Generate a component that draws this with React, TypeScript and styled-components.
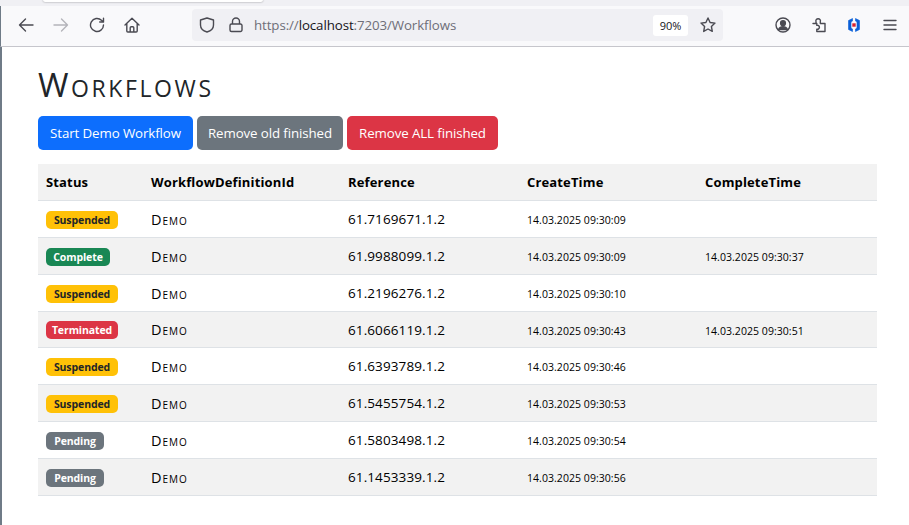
import React from "react";
import styled, { createGlobalStyle } from "styled-components";

const Global = createGlobalStyle`
  html, body { margin: 0; padding: 0; background: #fff; }
  body { width: 909px; height: 525px; overflow: hidden; font-family: "Open Sans", "Noto Sans", sans-serif; }
`;
const Page = styled.div`display: flex; flex-direction: column; width: 909px; height: 525px; overflow: hidden;`;
const TabStrip = styled.div`height: 6px; background: #f0f0f4; padding-left: 43px; flex: none;`;
const ActiveTab = styled.div`width: 220px; height: 2px; background: #fff; border-radius: 0 0 4px 4px; box-shadow: 0 0 2px rgba(0,0,0,.45);`;
const Toolbar = styled.div`height: 41px; flex: none; box-sizing: border-box; background: #f9f9fb; border-bottom: 1px solid #c6c6cc; border-left: 1px solid #6f7b87; display: flex; align-items: center; padding: 0 0 2px 17px;`;
const NavIcon = styled.svg<{ $gap: number; $faded?: boolean }>`width: 16px; height: 16px; flex: none; margin-right: ${p => p.$gap}px; fill: none; stroke: ${p => (p.$faded ? "#b4b4ba" : "#4a4a52")}; stroke-width: 1.4; stroke-linecap: round; stroke-linejoin: round;`;
const LogoIcon = styled.svg`width: 16px; height: 16px; flex: none; margin-right: 20px;`;
const UrlBar = styled.div`width: 531px; height: 32px; margin: 0 52px; background: #f0f0f4; border-radius: 4px; display: flex; align-items: center; padding: 0 7px; box-sizing: border-box; flex: none;`;
const UrlText = styled.div`margin-left: 10px; font: 400 13.3px "Open Sans", sans-serif; color: #6e6e78; flex: 1; white-space: nowrap; letter-spacing: -0.09px;`;
const UrlHost = styled.span`color: #15141a;`;
const Zoom = styled.div`width: 35px; height: 21px; background: #fff; border-radius: 3px; font: 400 11px/21px "Open Sans", sans-serif; color: #15141a; text-align: center; margin-right: 12px;`;
const Main = styled.main`flex: 1; border-left: 2px solid #6f7b87; padding: 16px 32px 0 36px; min-height: 0;`;
const Title = styled.h1`margin: 0 0 11px; font: 400 33px/44px "Open Sans", sans-serif; font-variant: small-caps; color: #212529; letter-spacing: 2.6px; height: 42px;`;
const Buttons = styled.div`display: flex; gap: 4px; margin-bottom: 14px;`;
const Button = styled.button<{ $bg: string; $w: number }>`width: ${p => p.$w}px; height: 34px; border: 0; border-radius: 5px; padding: 0; background: ${p => p.$bg}; color: #fff; font: 400 13.3px "Open Sans", sans-serif; letter-spacing: -0.1px;`;
const Table = styled.table`width: 839px; border-collapse: separate; border-spacing: 0; table-layout: fixed; color: #000;`;
const Head = styled.th<{ $w: number }>`width: ${p => p.$w}px; height: 37px; box-sizing: border-box; background: #f2f2f2; border-bottom: 1px solid #dee2e6; padding: 0 0 0 8px; text-align: left; font: 700 13px "Open Sans", sans-serif; letter-spacing: 0.15px;`;
const Row = styled.tr<{ $alt: boolean }>`background: ${p => (p.$alt ? "#f2f2f2" : "#fff")};`;
const Cell = styled.td<{ $h: number }>`height: ${p => p.$h}px; box-sizing: border-box; border-bottom: 1px solid #dee2e6; padding: 0 0 0 8px; font: 400 13.5px "Open Sans", sans-serif; letter-spacing: 0.1px; white-space: nowrap;`;
const DefCell = styled(Cell)`font-size: 14.5px; font-variant: small-caps; letter-spacing: 1px;`;
const TimeCell = styled(Cell)`padding-top: 2px; font-size: 10.5px; letter-spacing: 0.05px;`;
const Badge = styled.span<{ $bg: string; $fg: string; $w: number }>`display: inline-block; width: ${p => p.$w}px; height: 18px; border-radius: 5px; background: ${p => p.$bg}; color: ${p => p.$fg}; font: 700 10.5px/18px "Open Sans", sans-serif; text-align: center; letter-spacing: -0.1px; vertical-align: middle;`;

const variants: Record<string, { bg: string; fg: string; w: number }> = {
  Suspended: { bg: "#ffc107", fg: "#212529", w: 72 },
  Complete: { bg: "#198754", fg: "#fff", w: 64 },
  Terminated: { bg: "#dc3545", fg: "#fff", w: 72 },
  Pending: { bg: "#6c757d", fg: "#fff", w: 58 },
};

const rows = [
  ["Suspended", "61.7169671.1.2", "14.03.2025 09:30:09", "", 37],
  ["Complete", "61.9988099.1.2", "14.03.2025 09:30:09", "14.03.2025 09:30:37", 37],
  ["Suspended", "61.2196276.1.2", "14.03.2025 09:30:10", "", 37],
  ["Terminated", "61.6066119.1.2", "14.03.2025 09:30:43", "14.03.2025 09:30:51", 36],
  ["Suspended", "61.6393789.1.2", "14.03.2025 09:30:46", "", 37],
  ["Suspended", "61.5455754.1.2", "14.03.2025 09:30:53", "", 37],
  ["Pending", "61.5803498.1.2", "14.03.2025 09:30:54", "", 37],
  ["Pending", "61.1453339.1.2", "14.03.2025 09:30:56", "", 37],
] as const;

export default function App() {
  return (
    <Page>
      <Global />
      <TabStrip><ActiveTab /></TabStrip>
      <Toolbar>
        <NavIcon $gap={19} viewBox="0 0 16 16"><path d="M15 8H1.5M7.5 2 1.5 8l6 6" /></NavIcon>
        <NavIcon $gap={20} $faded viewBox="0 0 16 16"><path d="M1 8h13.5M8.5 2l6 6-6 6" /></NavIcon>
        <NavIcon $gap={19} viewBox="0 0 16 16"><path d="M14.5 8a6.5 6.5 0 1 1-2-4.7L14.5 5M14.5 1.2V5h-3.8" /></NavIcon>
        <NavIcon $gap={0} viewBox="0 0 16 16"><path d="M1 8 8 1.3 15 8M2.8 6.5V14a1 1 0 0 0 1 1h8.4a1 1 0 0 0 1-1V6.5M6.2 15v-4.3a1 1 0 0 1 1-1h1.6a1 1 0 0 1 1 1V15" /></NavIcon>
        <UrlBar>
          <NavIcon $gap={13} viewBox="0 0 16 16"><path d="M8 1 1.5 3v5c0 3.6 3 6 6.5 7 3.5-1 6.5-3.4 6.5-7V3L8 1Z" /></NavIcon>
          <NavIcon $gap={0} viewBox="0 0 16 16"><path d="M4.5 7V4.5a3.5 3.5 0 0 1 7 0V7M3.5 7h9A1.5 1.5 0 0 1 14 8.5V13a1.5 1.5 0 0 1-1.5 1.5h-9A1.5 1.5 0 0 1 2 13V8.5A1.5 1.5 0 0 1 3.5 7Z" /></NavIcon>
          <UrlText>https://<UrlHost>localhost</UrlHost>:7203/Workflows</UrlText>
          <Zoom>90%</Zoom>
          <NavIcon $gap={0} viewBox="0 0 16 16"><path d="M8 1l2.1 4.5 4.9.6-3.6 3.4.9 4.9L8 12l-4.3 2.4.9-4.900L1 6.100l4.900-.6L8 1Z" /></NavIcon>
        </UrlBar>
        <NavIcon $gap={20} viewBox="0 0 16 16"><circle cx="8" cy="8" r="7" /><circle cx="8" cy="6.2" r="2.4" fill="#4a4a52" /><path d="M3.5 12.500c1-2 2.500-2.700 4.500-2.700s3.500.7 4.500 2.700Z" fill="#4a4a52" /></NavIcon>
        <NavIcon $gap={19} viewBox="0 0 16 16"><path d="M2 6.500h3V4.800a2.300 2.300 0 1 1 4.300 0V6.500H14v8H5.800v-2.300a2 2 0 1 0 0-3.800V6.500" /></NavIcon>
        <LogoIcon viewBox="0 0 16 16">
          <path d="M6.500 1.500 2.500 3.500v9l4 2V12L5 11V5l1.500-1ZM9.500 1.500l4 2v9l-4 2V12l1.500-1V5L9.500 4Z" fill="#0a5fd8" stroke="#0a5fd8" strokeWidth="0.6" strokeLinejoin="round" />
          <rect x="6.300" y="6.300" width="3.400" height="3.400" fill="#d8232f" />
        </LogoIcon>
        <NavIcon $gap={0} viewBox="0 0 16 16"><path d="M2 3.500h12M2 8h12M2 12.500h12" /></NavIcon>
      </Toolbar>
      <Main>
        <Title>Workflows</Title>
        <Buttons>
          <Button $bg="#0d6efd" $w={155}>Start Demo Workflow</Button>
          <Button $bg="#6c757d" $w={146}>Remove old finished</Button>
          <Button $bg="#dc3545" $w={151}>Remove ALL finished</Button>
        </Buttons>
        <Table>
          <thead>
            <tr>
              <Head $w={105}>Status</Head>
              <Head $w={197}>WorkflowDefinitionId</Head>
              <Head $w={179}>Reference</Head>
              <Head $w={178}>CreateTime</Head>
              <Head $w={180}>CompleteTime</Head>
            </tr>
          </thead>
          <tbody>
            {rows.map(([status, ref, created, done, h], i) => {
              const v = variants[status];
              return (
                <Row key={ref} $alt={i % 2 === 1}>
                  <Cell $h={h}><Badge $bg={v.bg} $fg={v.fg} $w={v.w}>{status}</Badge></Cell>
                  <DefCell $h={h}>Demo</DefCell>
                  <Cell $h={h}>{ref}</Cell>
                  <TimeCell $h={h}>{created}</TimeCell>
                  <TimeCell $h={h}>{done}</TimeCell>
                </Row>
              );
            })}
          </tbody>
        </Table>
      </Main>
    </Page>
  );
}
